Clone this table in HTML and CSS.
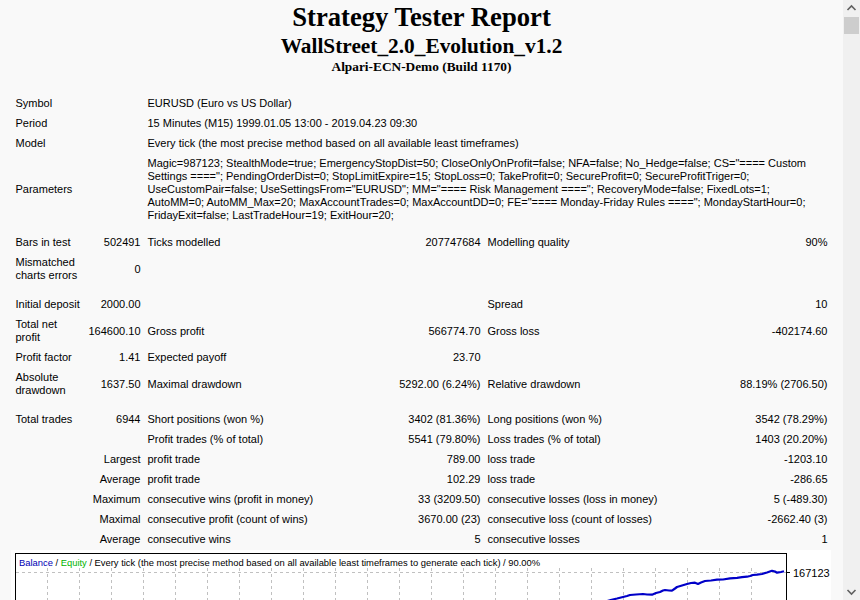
FILE: index.html
```html
<!DOCTYPE html>
<html>
<head>
<meta charset="utf-8">
<title>Strategy Tester: WallStreet_2.0_Evolution_v1.2</title>
<link rel="stylesheet" href="styles.css">
</head>
<body>
<div class="window">
  <main class="page">
    <header class="head">
      <div class="title">Strategy Tester Report</div>
      <div class="subtitle">WallStreet_2.0_Evolution_v1.2</div>
      <div class="server">Alpari-ECN-Demo (Build 1170)</div>
    </header>
    <table class="report">
      <colgroup>
        <col class="c1"><col class="c2"><col class="c3"><col class="c4"><col class="c5"><col class="c6">
      </colgroup>
      <tr><td colspan="2">Symbol</td><td colspan="4">EURUSD (Euro vs US Dollar)</td></tr>
      <tr><td colspan="2">Period</td><td colspan="4">15 Minutes (M15) 1999.01.05 13:00 - 2019.04.23 09:30</td></tr>
      <tr><td colspan="2">Model</td><td colspan="4">Every tick (the most precise method based on all available least timeframes)</td></tr>
      <tr><td colspan="2">Parameters</td><td colspan="4">Magic=987123; StealthMode=true; EmergencyStopDist=50; CloseOnlyOnProfit=false; NFA=false; No_Hedge=false; CS="==== Custom<br>Settings ===="; PendingOrderDist=0; StopLimitExpire=15; StopLoss=0; TakeProfit=0; SecureProfit=0; SecureProfitTriger=0;<br>UseCustomPair=false; UseSettingsFrom="EURUSD"; MM="==== Risk Management ===="; RecoveryMode=false; FixedLots=1;<br>AutoMM=0; AutoMM_Max=20; MaxAccountTrades=0; MaxAccountDD=0; FE="==== Monday-Friday Rules ===="; MondayStartHour=0;<br>FridayExit=false; LastTradeHour=19; ExitHour=20;</td></tr>
      <tr class="gap gap-short"><td colspan="6"></td></tr>
      <tr><td>Bars in test</td><td class="num">502491</td><td>Ticks modelled</td><td class="num">207747684</td><td>Modelling quality</td><td class="num">90%</td></tr>
      <tr><td>Mismatched charts errors</td><td class="num">0</td><td></td><td></td><td></td><td></td></tr>
      <tr class="gap"><td colspan="6"></td></tr>
      <tr><td>Initial deposit</td><td class="num">2000.00</td><td></td><td></td><td>Spread</td><td class="num">10</td></tr>
      <tr><td>Total net profit</td><td class="num">164600.10</td><td>Gross profit</td><td class="num">566774.70</td><td>Gross loss</td><td class="num">-402174.60</td></tr>
      <tr><td>Profit factor</td><td class="num">1.41</td><td>Expected payoff</td><td class="num">23.70</td><td></td><td></td></tr>
      <tr><td>Absolute drawdown</td><td class="num">1637.50</td><td>Maximal drawdown</td><td class="num">5292.00 (6.24%)</td><td>Relative drawdown</td><td class="num">88.19% (2706.50)</td></tr>
      <tr class="gap"><td colspan="6"></td></tr>
      <tr><td>Total trades</td><td class="num">6944</td><td>Short positions (won %)</td><td class="num">3402 (81.36%)</td><td>Long positions (won %)</td><td class="num">3542 (78.29%)</td></tr>
      <tr><td colspan="2"></td><td>Profit trades (% of total)</td><td class="num">5541 (79.80%)</td><td>Loss trades (% of total)</td><td class="num">1403 (20.20%)</td></tr>
      <tr><td colspan="2" class="num">Largest</td><td>profit trade</td><td class="num">789.00</td><td>loss trade</td><td class="num">-1203.10</td></tr>
      <tr><td colspan="2" class="num">Average</td><td>profit trade</td><td class="num">102.29</td><td>loss trade</td><td class="num">-286.65</td></tr>
      <tr><td colspan="2" class="num">Maximum</td><td>consecutive wins (profit in money)</td><td class="num">33 (3209.50)</td><td>consecutive losses (loss in money)</td><td class="num">5 (-489.30)</td></tr>
      <tr><td colspan="2" class="num">Maximal</td><td>consecutive profit (count of wins)</td><td class="num">3670.00 (23)</td><td>consecutive loss (count of losses)</td><td class="num">-2662.40 (3)</td></tr>
      <tr><td colspan="2" class="num">Average</td><td>consecutive wins</td><td class="num">5</td><td>consecutive losses</td><td class="num">1</td></tr>
    </table>
    <svg class="graph" width="820" height="200" viewBox="0 0 820 200">
      <rect x="0" y="0" width="820" height="200" fill="#ffffff"/>
      <g stroke="#c0c0c0" stroke-width="1" stroke-dasharray="3 3" fill="none">
        <line x1="5" y1="22.5" x2="775" y2="22.5"/>
        <line x1="36.5" y1="18" x2="36.5" y2="200"/>
        <line x1="68.5" y1="18" x2="68.5" y2="200"/>
        <line x1="100.5" y1="18" x2="100.5" y2="200"/>
        <line x1="132.5" y1="18" x2="132.5" y2="200"/>
        <line x1="164.5" y1="18" x2="164.5" y2="200"/>
        <line x1="196.5" y1="18" x2="196.5" y2="200"/>
        <line x1="228.5" y1="18" x2="228.5" y2="200"/>
        <line x1="260.5" y1="18" x2="260.5" y2="200"/>
        <line x1="292.5" y1="18" x2="292.5" y2="200"/>
        <line x1="324.5" y1="18" x2="324.5" y2="200"/>
        <line x1="356.5" y1="18" x2="356.5" y2="200"/>
        <line x1="388.5" y1="18" x2="388.5" y2="200"/>
        <line x1="420.5" y1="18" x2="420.5" y2="200"/>
        <line x1="452.5" y1="18" x2="452.5" y2="200"/>
        <line x1="484.5" y1="18" x2="484.5" y2="200"/>
        <line x1="516.5" y1="18" x2="516.5" y2="200"/>
        <line x1="548.5" y1="18" x2="548.5" y2="200"/>
        <line x1="580.5" y1="18" x2="580.5" y2="200"/>
        <line x1="612.5" y1="18" x2="612.5" y2="200"/>
        <line x1="644.5" y1="18" x2="644.5" y2="200"/>
        <line x1="676.5" y1="18" x2="676.5" y2="200"/>
        <line x1="708.5" y1="18" x2="708.5" y2="200"/>
        <line x1="740.5" y1="18" x2="740.5" y2="200"/>
      </g>
      <rect x="4.5" y="3.5" width="771" height="190" fill="none" stroke="#000" stroke-width="1"/>
      <line x1="776" y1="22.5" x2="779" y2="22.5" stroke="#000"/>
      <text x="782" y="26.5" class="axis">167123</text>
      <text x="8" y="15.5" class="legend"><tspan fill="#0000b4">Balance</tspan> / <tspan fill="#00b400">Equity</tspan> / Every tick (the most precise method based on all available least timeframes to generate each tick) / 90.00%</text>
      <polyline fill="none" stroke="#0000c8" stroke-width="2.2" stroke-linejoin="bevel" points="520,80 560,62 590,53 600.7,49.7 606,48.5 612,47 616,46 619,45 625,44.5 632,44 636,44.5 641,44.7 645,43 649,42 652,40.5 654,40 658,40.5 661,40.7 664,38.5 666,37 671,35.5 676,34 680,33 684,32.7 687,34 690,32.5 694,31 700,30.5 706,29.7 712,29.5 719,28.3 726,27.8 731,27.2 736,26.7 739,26 742,25 746,24.6 751,24 756,22.5 761,20.7 764,21.5 766,22.7 770,22 773,21.3"/>
    </svg>
  </main>
  <aside class="scrollbar">
    <div class="sb-btn">
      <svg width="17" height="17" viewBox="0 0 17 17"><path d="M4.5 10 L8.5 6 L12.5 10" fill="none" stroke="#606060" stroke-width="1.6"/></svg>
    </div>
    <div class="sb-track"><div class="sb-thumb"></div></div>
    <div class="sb-btn">
      <svg width="17" height="17" viewBox="0 0 17 17"><path d="M4.5 7 L8.5 11 L12.5 7" fill="none" stroke="#606060" stroke-width="1.6"/></svg>
    </div>
  </aside>
</div>
</body>
</html>
```
FILE: styles.css
```css
html, body {
  margin: 0;
  padding: 0;
  background: #f9f9f9;
}

.window {
  display: flex;
  width: 860px;
  height: 600px;
  overflow: hidden;
}

.page {
  width: 843px;
  flex: 0 0 843px;
  padding-top: 2px;
  background: #f9f9f9;
  overflow: hidden;
}

.head {
  text-align: center;
  font-family: "Liberation Serif", "Times New Roman", serif;
  font-weight: bold;
  color: #000;
  margin-bottom: 18px;
}

.title {
  font-size: 26.67px;
  line-height: 31px;
}

.subtitle {
  font-size: 21.33px;
  line-height: 26px;
}

.server {
  font-size: 13.33px;
  line-height: 16px;
}

.report {
  width: 820px;
  margin: 0 auto;
  table-layout: fixed;
  border-collapse: separate;
  border-spacing: 1px;
  font-family: "Liberation Sans", Arial, sans-serif;
  font-size: 11px;
  line-height: 13px;
  color: #000;
}

.report td {
  padding: 3px;
  text-align: left;
  vertical-align: middle;
}

.report td.num {
  text-align: right;
}

.report tr.gap td {
  padding: 0;
  height: 8px;
}

.report tr.gap-short td {
  height: 6px;
}

.c1 { width: 72px; }
.c2 { width: 58px; }
.c3 { width: 236px; }
.c4 { width: 102px; }
.c5 { width: 236px; }
.c6 { width: 109px; }

.graph {
  display: block;
  margin: 0 0 0 11px;
}

.graph .legend {
  font-family: "Liberation Sans", Arial, sans-serif;
  font-size: 9.4px;
  fill: #000;
}

.graph .axis {
  font-family: "Liberation Sans", Arial, sans-serif;
  font-size: 11px;
  fill: #000;
}

.scrollbar {
  flex: 0 0 17px;
  width: 17px;
  height: 600px;
  background: #f0f0f0;
  display: flex;
  flex-direction: column;
}

.sb-btn {
  height: 17px;
  flex: 0 0 17px;
}

.sb-btn svg {
  display: block;
}

.sb-track {
  flex: 1;
  padding: 0 1px;
}

.sb-thumb {
  height: 17px;
  background: #cdcdcd;
}
```
